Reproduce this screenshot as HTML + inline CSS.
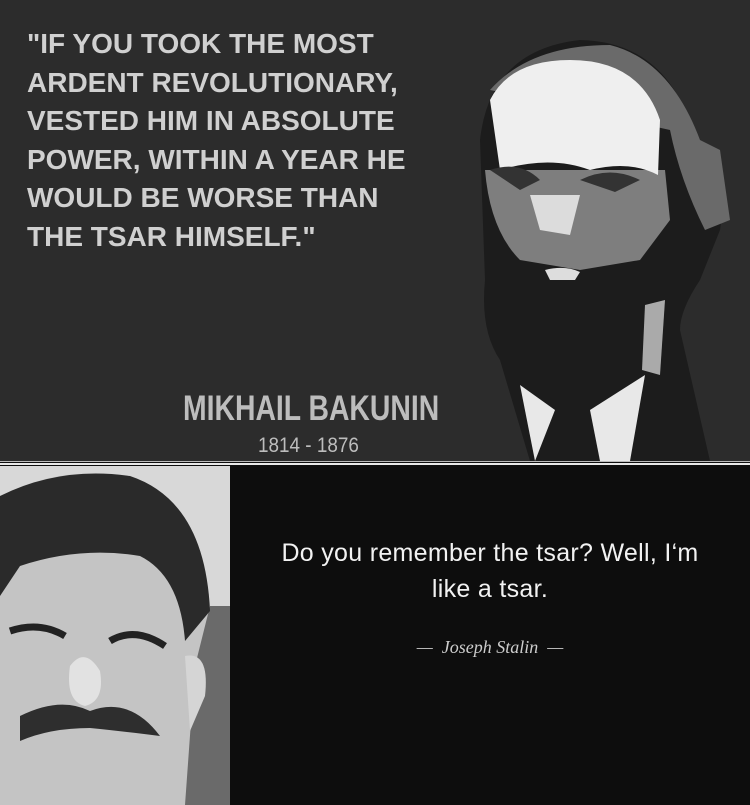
<!DOCTYPE html>
<html><head><style>
body{margin:0;width:750px;height:805px;overflow:hidden;background:#0d0d0d;position:relative;font-family:"Liberation Sans",sans-serif}
.top{position:absolute;left:0;top:0;width:750px;height:461px;background:#2c2c2c}
.line{position:absolute;left:0;top:461px;width:750px;height:5px;background:#0d0d0d;border-top:1px solid #bbb}
.line:after{content:"";position:absolute;left:0;top:1px;width:750px;height:2px;background:#e8e8e8}
.q{position:absolute;left:27px;top:25px;color:#d0d0d0;font-weight:bold;font-size:28px;line-height:38.5px;letter-spacing:0px}
.name{position:absolute;left:183px;top:389px;color:#bdbdbd;font-weight:bold;font-size:35px;transform:scaleX(0.81);transform-origin:left}
.yr{position:absolute;left:258px;top:434px;color:#bdbdbd;font-size:21px;transform:scaleX(0.9);transform-origin:left}
.bq{position:absolute;left:240px;top:535px;width:500px;text-align:center;color:#f2f2f2;font-size:25px;line-height:36px;letter-spacing:0.3px}
.au{position:absolute;left:250px;top:637px;width:480px;text-align:center;color:#ccc;font-size:18px;font-style:italic;font-family:"Liberation Serif",serif}
</style></head><body>
<div class="top"></div>
<svg style="position:absolute;left:430px;top:30px" width="320" height="431" viewBox="0 0 320 431">
<path d="M50 110 Q60 20 150 10 Q240 12 265 110 Q300 130 290 200 L270 250 Q250 280 250 300 L280 431 L100 431 L70 330 Q50 300 55 250 Z" fill="#1c1c1c"/>
<path d="M60 60 Q100 15 180 15 Q240 30 270 110 L290 120 L300 190 L275 200 Q250 150 240 100 Z" fill="#6a6a6a"/>
<path d="M55 140 Q60 200 90 230 L150 240 L210 230 L240 190 L235 140 Z" fill="#7e7e7e"/>
<path d="M60 70 Q80 30 140 30 Q210 30 230 90 L228 145 Q200 130 160 140 Q120 125 70 140 Z" fill="#efefef"/>
<path d="M100 165 L150 165 L140 205 L110 200 Z" fill="#dcdcdc"/>
<path d="M60 140 Q90 130 110 150 L90 160 Z M150 150 Q180 135 210 150 L185 162 Z" fill="#333"/>
<path d="M115 240 Q135 235 150 242 L145 250 L120 250 Z" fill="#ddd"/>
<path d="M90 355 L125 380 L105 431 Z" fill="#e8e8e8"/>
<path d="M160 380 L215 345 L200 431 L170 431 Z" fill="#e8e8e8"/>
<path d="M215 275 L235 270 L230 345 L212 340 Z" fill="#aaa"/>
</svg>
<div class="q">"IF YOU TOOK THE MOST<br>ARDENT REVOLUTIONARY,<br>VESTED HIM IN ABSOLUTE<br>POWER, WITHIN A YEAR HE<br>WOULD BE WORSE THAN<br>THE TSAR HIMSELF."</div>
<div class="name">MIKHAIL BAKUNIN</div>
<div class="yr">1814 - 1876</div>
<div class="line"></div>
<svg style="position:absolute;left:0;top:466px" width="230" height="339" viewBox="0 0 230 339">
<rect width="230" height="339" fill="#d8d8d8"/>
<rect x="170" y="140" width="60" height="199" fill="#6a6a6a"/>
<path d="M0 30 Q60 0 120 10 Q200 30 210 140 L195 200 L185 339 L0 339 Z" fill="#c4c4c4"/>
<path d="M0 30 Q60 0 130 10 Q205 35 210 145 L185 175 Q180 110 140 90 Q80 80 20 100 L0 130 Z" fill="#2a2a2a"/>
<path d="M185 190 Q210 185 205 230 L190 265 Z" fill="#d5d5d5"/>
<path d="M10 165 Q40 155 65 170 M110 175 Q135 160 165 180" stroke="#222" stroke-width="7" fill="none"/>
<path d="M20 250 Q60 230 90 245 Q130 230 160 270 Q120 265 90 262 Q50 262 20 275 Z" fill="#2e2e2e"/>
<path d="M70 200 Q85 180 100 205 Q105 235 85 240 Q65 235 70 200 Z" fill="#e2e2e2"/>
</svg>
<div class="bq">Do you remember the tsar? Well, I‘m<br>like a tsar.</div>
<div class="au">— &nbsp;Joseph Stalin&nbsp; —</div>
</body></html>
